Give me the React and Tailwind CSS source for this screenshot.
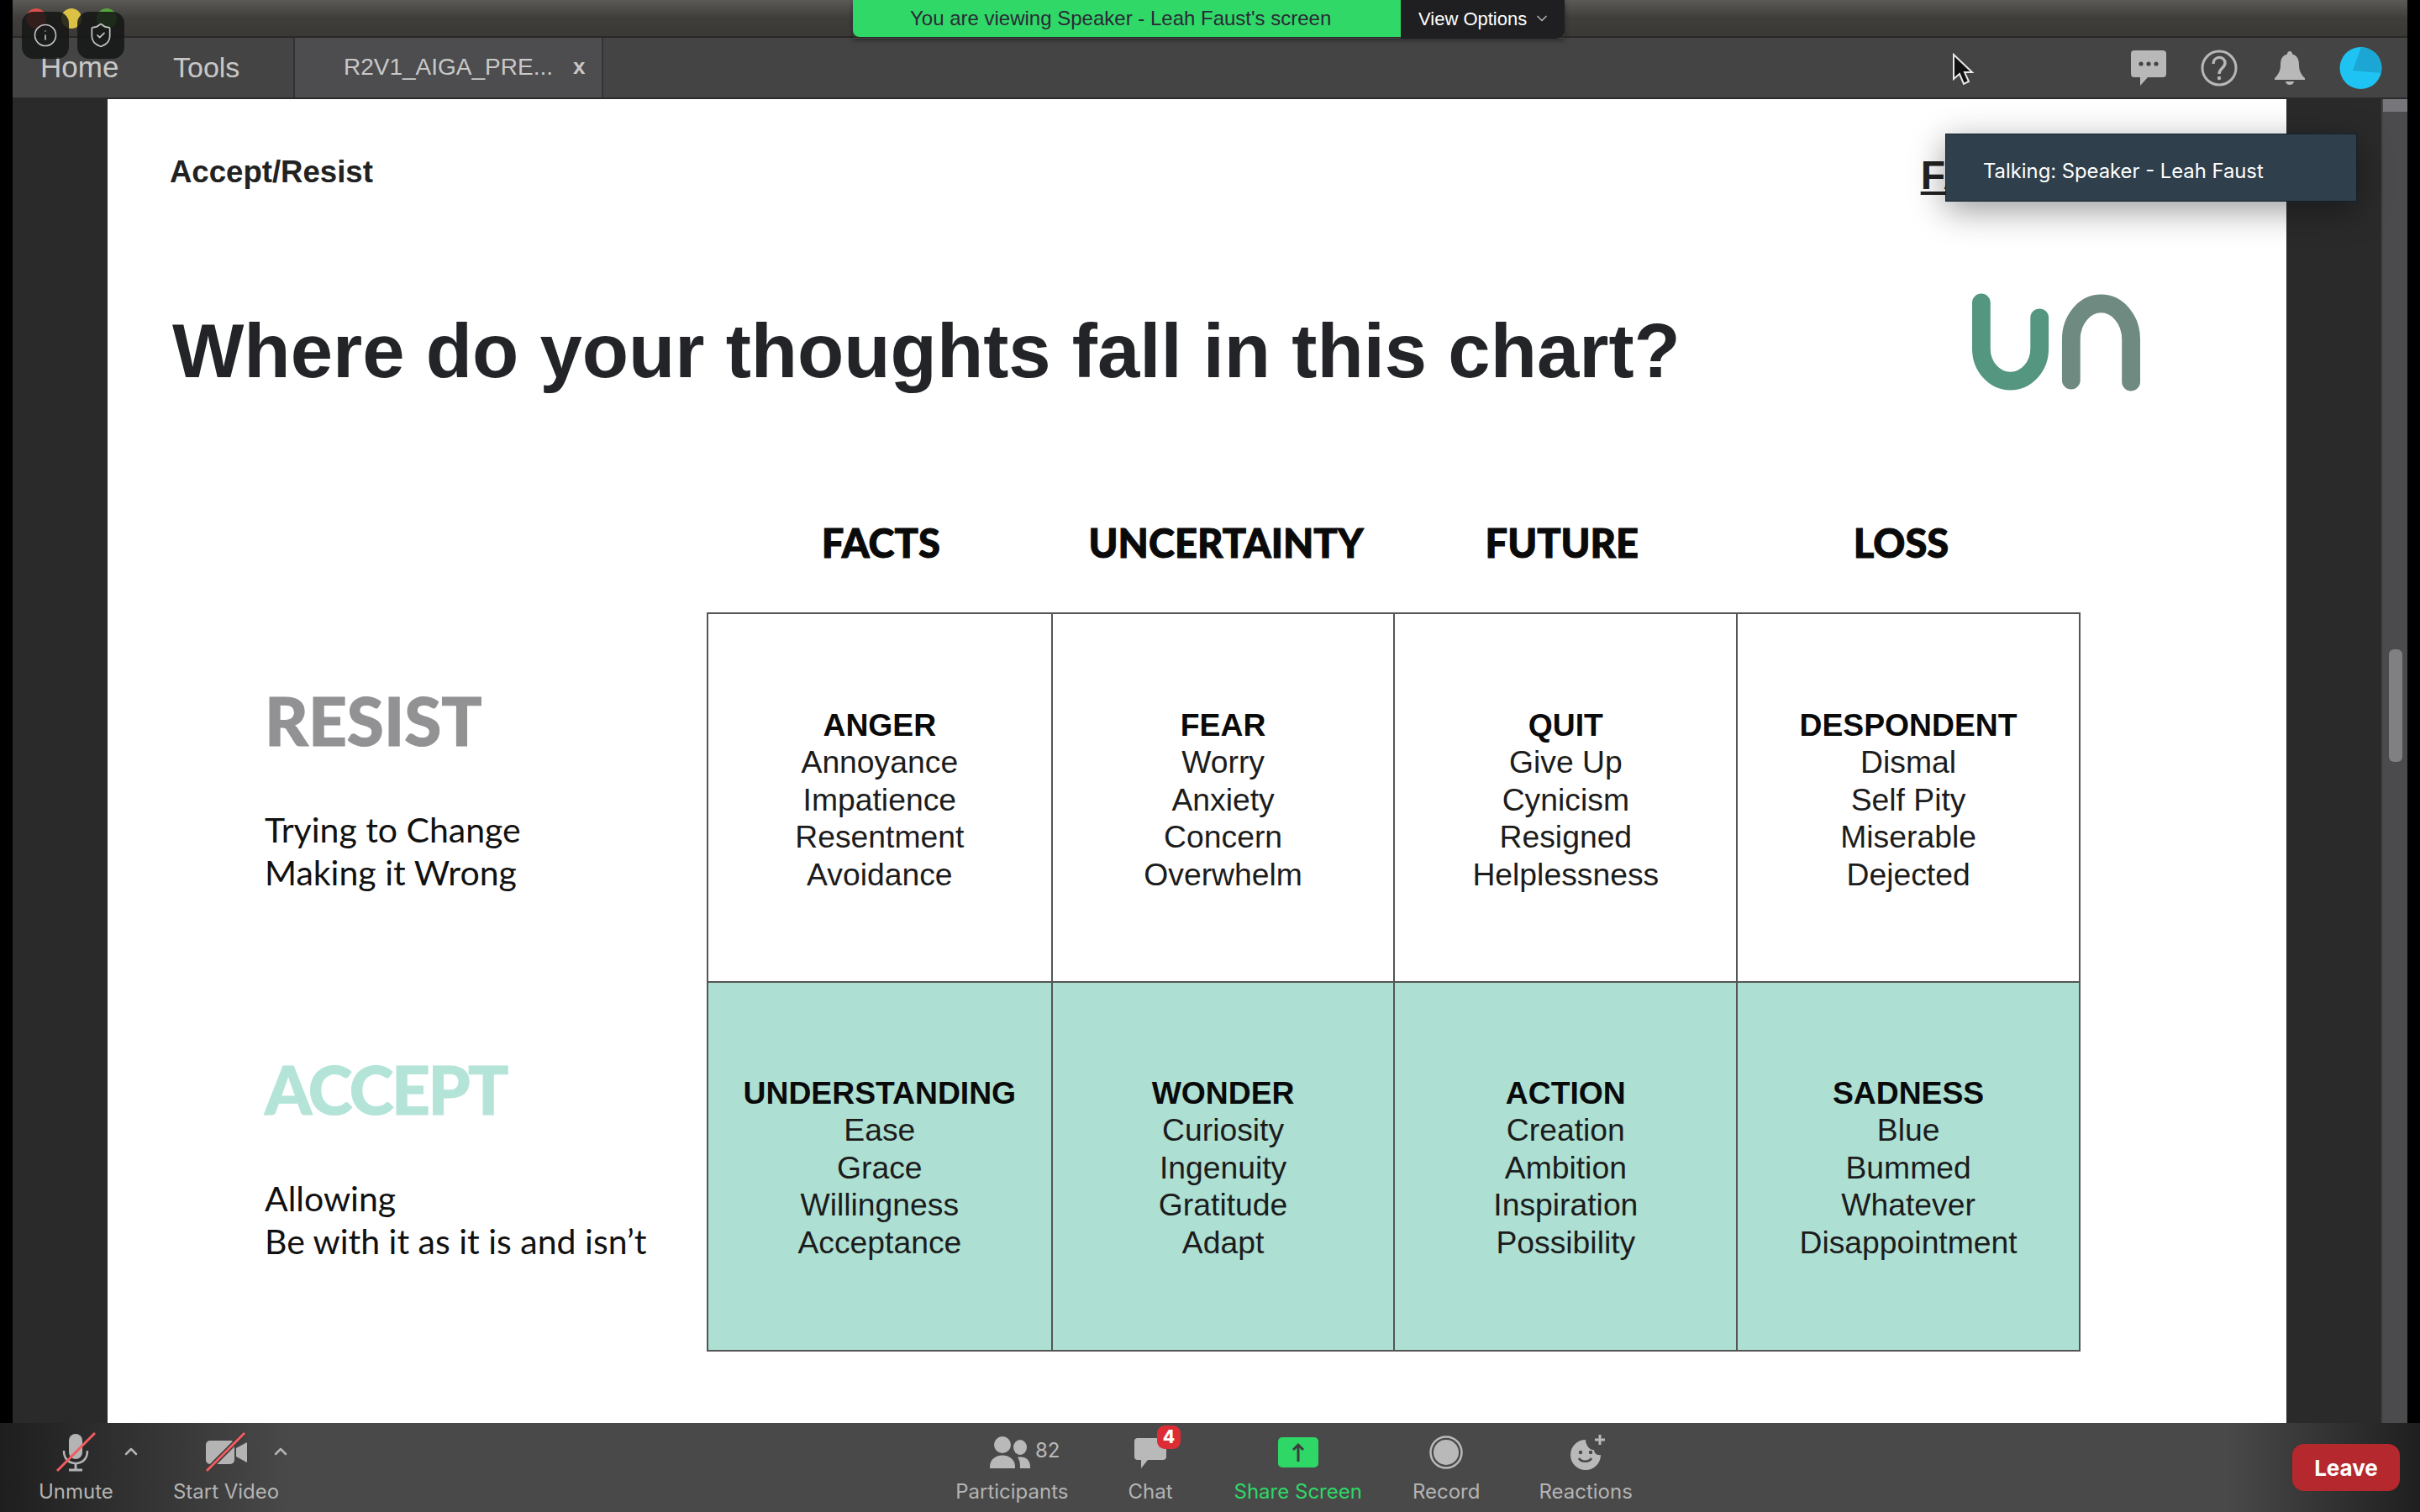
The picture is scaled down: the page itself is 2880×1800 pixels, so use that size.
import React from 'react';
import { ChevronUp, ChevronDown, Info, ShieldCheck } from 'lucide-react';

const columns = [
  { head: 'FACTS', offset: 'pl-[6px]', top: ['ANGER', 'Annoyance', 'Impatience', 'Resentment', 'Avoidance'], bottom: ['UNDERSTANDING', 'Ease', 'Grace', 'Willingness', 'Acceptance'] },
  { head: 'UNCERTAINTY', offset: 'pl-[10px]', top: ['FEAR', 'Worry', 'Anxiety', 'Concern', 'Overwhelm'], bottom: ['WONDER', 'Curiosity', 'Ingenuity', 'Gratitude', 'Adapt'] },
  { head: 'FUTURE', offset: 'pr-[8px]', top: ['QUIT', 'Give Up', 'Cynicism', 'Resigned', 'Helplessness'], bottom: ['ACTION', 'Creation', 'Ambition', 'Inspiration', 'Possibility'] },
  { head: 'LOSS', offset: 'pr-[18px]', top: ['DESPONDENT', 'Dismal', 'Self Pity', 'Miserable', 'Dejected'], bottom: ['SADNESS', 'Blue', 'Bummed', 'Whatever', 'Disappointment'] },
];

function Cell({ lines, teal, first }) {
  return (
    <div className={`flex flex-col items-center justify-center text-[37.3px] leading-[44.6px] text-[#1c1c1c] ${teal ? 'h-[437px] bg-[#addfd3] pt-[3px]' : 'h-[439px] border-b-2 border-[#555] bg-white pt-[5px]'} ${first ? '' : 'border-l-2 border-l-[#555]'}`}>
      <div className="font-bold text-[#0a0a0a]">{lines[0]}</div>
      {lines.slice(1).map(l => <div key={l}>{l}</div>)}
    </div>
  );
}

function SideLabel({ title, color, lines, h }) {
  return (
    <div className={`${h} pl-[187px]`}>
      <div className={`font-['Lato'] text-[80px] font-black leading-[60px] [-webkit-text-stroke:1px_currentColor] ${color}`}>{title}</div>
      <div className="mt-[75px] font-['Lato'] text-[41px] leading-[51px] text-[#111]">
        {lines.map(l => <div key={l}>{l}</div>)}
      </div>
    </div>
  );
}

function BarItem({ label, green, children }) {
  return (
    <div className="flex flex-col items-center">
      <div className="flex h-[50px] items-center justify-center">{children}</div>
      <div className={`mt-[7px] text-[24px] leading-[30px] ${green ? 'text-[#2fd866]' : 'text-[#b4b4b4]'}`}>{label}</div>
    </div>
  );
}

export default function App() {
  return (
    <div className="relative flex h-[1800px] w-[2880px] flex-col overflow-hidden bg-black font-['Inter',sans-serif]">
      {/* window title bar */}
      <div className="mx-[15px] h-[45px] border-b-2 border-[#2a2827] bg-gradient-to-b from-[#5c5a57] via-[#403e3b] to-[#3b3936]" />

      {/* tab row */}
      <div className="mx-[15px] flex h-[73px] items-center border-b-2 border-[#2b2b2b] bg-[#444444] text-[#c8c8c8]">
        <div className="mb-[2px] ml-[33px] w-[158px] font-['Liberation_Sans'] text-[35px] leading-[40px]">Home</div>
        <div className="mb-[2px] w-[143px] font-['Liberation_Sans'] text-[34px] leading-[40px]">Tools</div>
        <div className="flex h-full w-[369px] items-center border-x-2 border-[#333] bg-[#4d4c4e] pb-[2px] pl-[58px] font-['Liberation_Sans'] text-[28px]">
          <span>R2V1_AIGA_PRE...</span>
          <span className="ml-[24px] text-[26px] font-bold">x</span>
        </div>
        <div className="flex-1" />
        <svg className="mr-[41px]" width="42" height="42" viewBox="0 0 42 42" fill="#b8b8b8">
          <path d="M4 0h34a4 4 0 0 1 4 4v24a4 4 0 0 1-4 4H20L11 42v-10H4a4 4 0 0 1-4-4V4a4 4 0 0 1 4-4z" />
          <circle cx="12" cy="16" r="2.6" fill="#444" /><circle cx="21" cy="16" r="2.6" fill="#444" /><circle cx="30" cy="16" r="2.6" fill="#444" />
        </svg>
        <svg className="mr-[44px]" width="44" height="44" viewBox="0 0 44 44" fill="none">
          <circle cx="22" cy="22" r="20" stroke="#b8b8b8" strokeWidth="3" />
          <path d="M15 17c0-10 14-10 14-1 0 6-7 6-7 13" stroke="#b8b8b8" strokeWidth="3.4" />
          <circle cx="22" cy="34" r="2.2" fill="#b8b8b8" />
        </svg>
        <svg className="mr-[41px]" width="36" height="40" viewBox="0 0 36 40" fill="#b8b8b8">
          <path d="M18 0c2 0 3 1.5 3 3.5C27 5 29 10 29 16c0 7 2 11 7 16v2H0v-2c5-5 7-9 7-16 0-6 2-11 8-12.5C15 1.5 16 0 18 0z" />
          <path d="M13 36h10a5 4 0 0 1-10 0z" />
        </svg>
        <svg className="mr-[30px]" width="51" height="50" viewBox="0 0 51 50">
          <ellipse cx="25.5" cy="25" rx="25" ry="25" fill="#1fc3f3" />
          <path d="M26 0 C36 1 44 6 49 17 L50 31 L16 28 Z" fill="#1ba6d4" />
        </svg>
      </div>

      {/* content area */}
      <div className="mx-[15px] flex min-h-0 flex-1">
        <div className="w-[113px] bg-[#2a2a2b]" />
        <div className="flex w-[2594px] flex-col bg-white text-[#1a1a1a]">
          <div className="flex items-start justify-between pl-[74px] pr-[374px] pt-[69px]">
            <div className="font-['Liberation_Sans'] text-[36.6px] font-bold leading-[36px] text-[#222]">Accept/Resist</div>
            <div className="mt-[-2px] font-['Liberation_Sans'] text-[48px] font-bold leading-[48px] text-[#222] underline">FA</div>
          </div>
          <div className="mt-[135px] flex items-start justify-between pl-[77px] pr-[174px]">
            <div className="font-['Liberation_Sans'] text-[90.5px] font-bold leading-[100px] text-[#222427]">Where do your thoughts fall in this chart?</div>
            <svg className="mt-[-19px]" width="200" height="117" viewBox="0 0 202 117" fill="none" strokeWidth="22" strokeLinecap="round">
              <path d="M11 11v55a35 39 0 0 0 70 0V29" stroke="#549680" />
              <path d="M119 104V55a36 43 0 0 1 72 0v51" stroke="#6f8a80" />
            </svg>
          </div>

          <div className="ml-[713px] mt-[153px] grid w-[1635px] grid-cols-4 text-center font-['Lato'] text-[47px] font-black leading-[50px] text-[#0a0a0a] [-webkit-text-stroke:1px_#0a0a0a]">
            {columns.map(c => <div key={c.head} className={c.offset}>{c.head}</div>)}
          </div>

          <div className="mt-[58px] flex">
            <div className="w-[713px] pt-[98px]">
              <SideLabel title="RESIST" color="text-[#929294]" lines={['Trying to Change', 'Making it Wrong']} h="h-[439px]" />
              <SideLabel title="ACCEPT" color="text-[#b4e4d8] tracking-[-2.5px]" lines={['Allowing', "Be with it as it is and isn\u2019t"]} h="h-[341px]" />
            </div>
            <div className="grid w-[1635px] grid-cols-4 border-2 border-[#555] font-['Liberation_Sans']">
              {columns.map((c, i) => <Cell key={c.head} lines={c.top} first={i === 0} />)}
              {columns.map((c, i) => <Cell key={c.bottom[0]} lines={c.bottom} teal first={i === 0} />)}
            </div>
          </div>
        </div>
        <div className="w-[113px] bg-[#2a2a2b]" />
        <div className="relative w-[31px] border-l-2 border-[#444] bg-[#4b4a4c]">
          <div className="h-[15px] w-full bg-[#77767a]" />
          <div className="absolute left-[7px] top-[655px] h-[134px] w-[16px] rounded-[6px] bg-[#807f82]" />
        </div>
      </div>

      {/* meeting controls */}
      <div className="flex h-[106px] items-center bg-[linear-gradient(90deg,#1e1e1e_0%,#494949_12%,#494949_92%,#1f1f1f_100%)]">
        <div className="ml-[46px] flex items-start">
          <BarItem label="Unmute">
            <svg width="48" height="48" viewBox="0 0 48 48" fill="none">
              <rect x="16" y="2" width="16" height="30" rx="8" fill="#b4b4b4" />
              <path d="M10 22c0 10 6 15 14 15s14-5 14-15" stroke="#b4b4b4" strokeWidth="2.5" />
              <path d="M24 37v7M16 45h16" stroke="#b4b4b4" strokeWidth="3" />
              <path d="M2 46L47 1" stroke="#f25b5f" strokeWidth="3" />
            </svg>
          </BarItem>
          <ChevronUp className="ml-[9px] mt-[12px]" size={24} color="#b4b4b4" strokeWidth={2.5} />
          <div className="ml-[38px]">
            <BarItem label="Start Video">
              <svg width="52" height="48" viewBox="0 0 52 48" fill="none">
                <rect x="2" y="10" width="34" height="28" rx="5" fill="#b4b4b4" />
                <path d="M38 19l11-6a1 1 0 0 1 2 1v20a1 1 0 0 1-2 1l-11-6z" fill="#b4b4b4" />
                <path d="M3 46L48 1" stroke="#3a3a3a" strokeWidth="6" />
                <path d="M3 46L48 1" stroke="#f25b5f" strokeWidth="3" />
              </svg>
            </BarItem>
          </div>
          <ChevronUp className="ml-[-10px] mt-[12px]" size={24} color="#b4b4b4" strokeWidth={2.5} />
        </div>

        <div className="ml-[791px] flex items-start">
          <BarItem label="Participants">
            <svg className="ml-[32px]" width="84" height="38" viewBox="0 0 84 38" fill="#b9b9b9">
              <ellipse cx="15" cy="10" rx="10" ry="10" />
              <path d="M0 36c0-18 30-18 30 0v2H0z" />
              <ellipse cx="36" cy="13" rx="8" ry="9" />
              <path d="M33 25c9-2 15 3 15 11v2H36c0-5 0-9-3-13z" />
              <text x="54" y="25" fontSize="24" fontFamily="Inter" fill="#b9b9b9">82</text>
            </svg>
          </BarItem>
          <div className="ml-[71px]">
            <BarItem label="Chat">
              <div className="relative">
                <svg width="42" height="38" viewBox="0 0 42 38" fill="#b9b9b9">
                  <path d="M6 2h30a4 4 0 0 1 4 4v18a4 4 0 0 1-4 4H18l-8 10v-10H6a4 4 0 0 1-4-4V6a4 4 0 0 1 4-4z" />
                </svg>
                <div className="absolute left-[29px] top-[-13px] flex h-[28px] w-[28px] items-center justify-center rounded-[9px] bg-[#dd2c35] text-[21px] font-extrabold leading-none text-white">4</div>
              </div>
            </BarItem>
          </div>
          <div className="ml-[73px]">
            <BarItem label="Share Screen" green>
              <div className="flex h-[36px] w-[48px] items-center justify-center rounded-[5px] bg-[#2fd866]">
                <svg width="16" height="24" viewBox="0 0 16 24" fill="none" stroke="#3c3c3c" strokeWidth="3">
                  <path d="M8 23V3M2 9l6-6 6 6" />
                </svg>
              </div>
            </BarItem>
          </div>
          <div className="ml-[60px]">
            <BarItem label="Record">
              <svg width="40" height="40" viewBox="0 0 40 40">
                <circle cx="20" cy="20" r="18.5" fill="none" stroke="#b9b9b9" strokeWidth="2.5" />
                <circle cx="20" cy="20" r="15" fill="#b9b9b9" />
              </svg>
            </BarItem>
          </div>
          <div className="ml-[70px]">
            <BarItem label="Reactions">
              <svg className="ml-[6px]" width="44" height="42" viewBox="0 0 44 42">
                <path d="M19 6a18 18 0 1 0 18 18c-4 1-8-2-8-6-5 1-10-6-10-12z" fill="#b9b9b9" />
                <circle cx="13" cy="21" r="2.2" fill="#494949" /><circle cx="25" cy="21" r="2.2" fill="#494949" />
                <path d="M11 28c3 5 12 5 15 0" stroke="#494949" strokeWidth="2.5" fill="none" />
                <path d="M36 0v12M30 6h12" stroke="#b9b9b9" strokeWidth="3" />
              </svg>
            </BarItem>
          </div>
        </div>

        <div className="ml-auto mr-[24px] flex h-[56px] w-[128px] items-center justify-center rounded-[14px] bg-[#b5282d] text-[26px] font-bold text-white">Leave</div>
      </div>

      {/* things floating over the window */}
      <div className="absolute left-[31px] top-[10px] h-[24px] w-[24px] rounded-full bg-[#d94f4a]" />
      <div className="absolute left-[73px] top-[10px] h-[24px] w-[24px] rounded-full bg-[#dcc244]" />
      <div className="absolute left-[115px] top-[10px] h-[24px] w-[24px] rounded-full bg-[#55a63a]" />
      <div className="absolute left-[26px] top-[14px] flex h-[56px] w-[56px] items-center justify-center rounded-[14px] bg-[#141615]/85">
        <Info size={30} color="#c4c4c4" strokeWidth={1.3} />
      </div>
      <div className="absolute left-[92px] top-[14px] flex h-[56px] w-[56px] items-center justify-center rounded-[14px] bg-[#141615]/85">
        <ShieldCheck size={32} color="#c4c4c4" strokeWidth={1.3} />
      </div>

      <div className="absolute left-[1015px] top-0 flex h-[46px] shadow-[0_2px_6px_rgba(0,0,0,0.4)]">
        <div className="flex h-[44px] w-[652px] items-center rounded-bl-[8px] bg-[#30d868] pl-[68px] font-['Liberation_Sans'] text-[24px] text-[#2a2a36]">You are viewing Speaker - Leah Faust's screen</div>
        <div className="flex w-[195px] items-center rounded-br-[10px] bg-[#1f1f21] pb-[2px] pl-[21px] font-['Liberation_Sans'] text-[22px] text-white">
          View Options
          <ChevronDown className="ml-[8px]" size={20} color="#b0b0b0" strokeWidth={2} />
        </div>
      </div>

      <svg className="absolute left-[2322px] top-[63px]" width="28" height="40" viewBox="0 0 28 40">
        <path d="M3 2v29l7-6 5 12 6-3-5-11h9z" fill="#111" stroke="#e8e8e8" strokeWidth="2" />
      </svg>

      <div className="absolute left-[2315px] top-[159px] flex h-[81px] w-[490px] items-center border border-[#16222b] bg-[#2f3f4b] pl-[44px] pt-[9px] text-[23.8px] text-white shadow-[0_10px_40px_rgba(0,0,0,0.4)]">
        Talking: Speaker - Leah Faust
      </div>
    </div>
  );
}
